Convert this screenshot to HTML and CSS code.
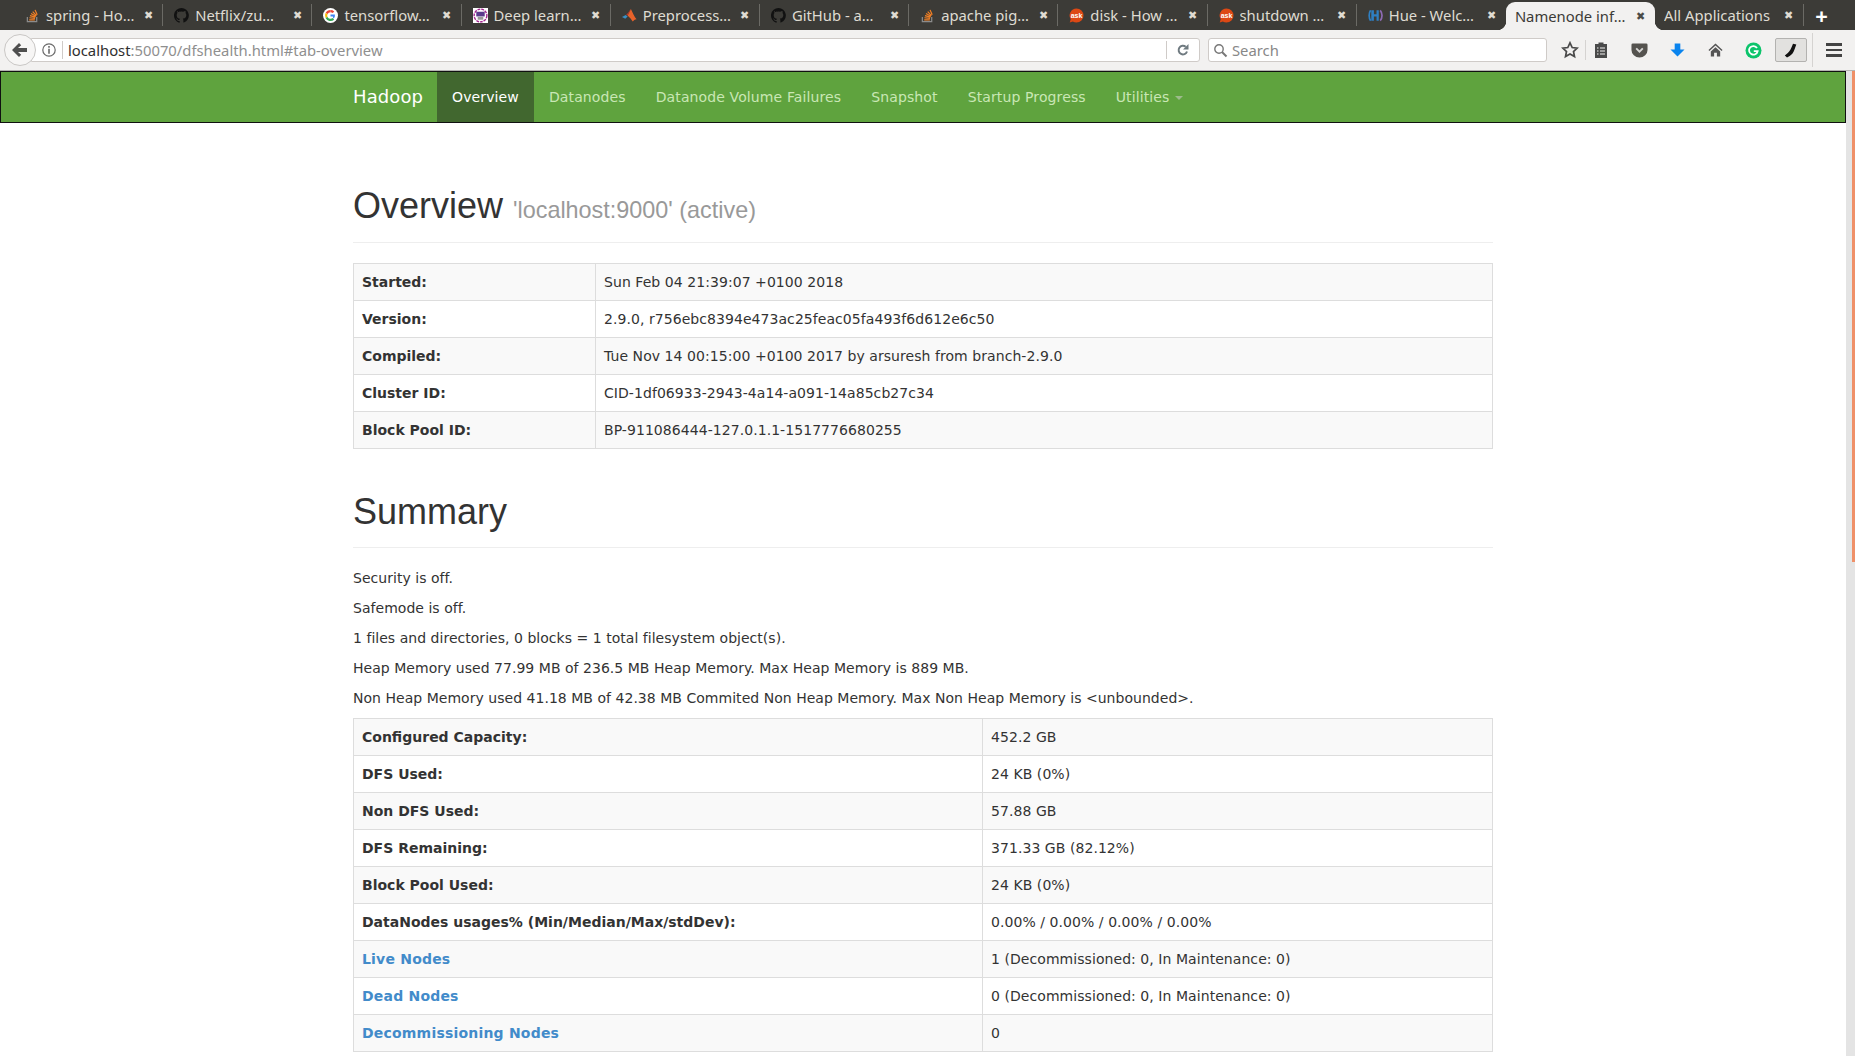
FILE: index.html
```html
<!DOCTYPE html>
<html lang="en">
<head>
  <meta charset="UTF-8" />
  <title>Namenode information</title>
  <link rel="stylesheet" href="styles.css">
</head>
<body>
  <svg class="defs" width="0" height="0">
    <symbol id="so" viewBox="0 0 16 16">
      <path d="M2.500 9.500v5h10v-5" fill="none" stroke="#8c8c8c" stroke-width="1.300"/>
      <path d="M4.500 12.600h6M4.700 10.400l6 .6M5.300 8.200l5.800 1.600M6.400 5.900l5.200 3M8.200 3.800l4 4.300M10.700 2l2.300 5.300" fill="none" stroke="#f48024" stroke-width="1.300"/>
    </symbol>
    <symbol id="gh" viewBox="0 0 16 16">
      <path fill="#111" d="M8 0a8 8 0 0 0-2.500 15.600c.4.1.5-.2.5-.4v-1.400c-2.200.5-2.700-1-2.700-1-.4-.9-.9-1.200-.9-1.200-.7-.5.100-.5.100-.5.800.1 1.200.8 1.200.8.700 1.200 1.900.9 2.300.7.100-.5.300-.9.500-1.100-1.800-.2-3.600-.9-3.600-4 0-.9.300-1.600.8-2.100-.1-.2-.4-1 .1-2.100 0 0 .7-.2 2.200.8a7.600 7.600 0 0 1 4 0c1.500-1 2.200-.8 2.200-.8.400 1.100.2 1.900.1 2.100.5.600.8 1.300.8 2.100 0 3.100-1.900 3.700-3.700 3.900.3.300.6.800.6 1.500v2.200c0 .2.100.5.600.4A8 8 0 0 0 8 0z"/>
    </symbol>
    <symbol id="ask" viewBox="0 0 16 16">
      <path fill="#dd4814" d="M8 .5a7.500 7.500 0 0 1 0 15c-1.500 0-2.800-.4-3.900-1.200L.8 15.500l1-3.500A7.500 7.500 0 0 1 8 .5z"/>
    </symbol>
  </svg>

  <header class="browser">
    <div class="tabstrip">
      <div class="tab">
        <svg class="favicon"><use href="#so"/></svg><span class="tab-title">spring - Ho…</span><span class="tab-close">✖</span>
      </div>
      <div class="tab">
        <svg class="favicon"><use href="#gh"/></svg><span class="tab-title">Netflix/zu…</span><span class="tab-close">✖</span>
      </div>
      <div class="tab">
        <svg class="favicon" viewBox="0 0 16 16">
          <circle cx="8" cy="8" r="8" fill="#fff"/>
          <path d="M8 3.300a4.700 4.700 0 0 0-4.200 2.600" fill="none" stroke="#ea4335" stroke-width="2.400"/>
          <path d="M3.800 5.900a4.700 4.700 0 0 0 0 4.200" fill="none" stroke="#fbbc05" stroke-width="2.400"/>
          <path d="M3.800 10.100a4.700 4.700 0 0 0 7.300 1.400" fill="none" stroke="#34a853" stroke-width="2.400"/>
          <path d="M11.100 11.500A4.700 4.700 0 0 0 12.700 7H8v2.100h2.500" fill="#4285f4"/>
          <path d="M8 3.300a4.700 4.700 0 0 1 3.200 1.200" fill="none" stroke="#ea4335" stroke-width="2.400"/>
        </svg><span class="tab-title">tensorflow…</span><span class="tab-close">✖</span>
      </div>
      <div class="tab">
        <svg class="favicon" viewBox="0 0 16 16">
          <rect width="16" height="16" fill="#fff"/>
          <circle cx="8" cy="8" r="6.800" fill="none" stroke="#a3238e" stroke-width="1.500" stroke-dasharray="3 1"/>
          <rect x="3.500" y="4" width="9" height="5" fill="#5b3a8c"/>
          <rect x="5" y="9.500" width="6" height="3" fill="#999"/>
        </svg><span class="tab-title">Deep learn…</span><span class="tab-close">✖</span>
      </div>
      <div class="tab">
        <svg class="favicon" viewBox="0 0 16 16">
          <path fill="#3a8fc4" d="M0 9.500l4-2 2 1.500-2.500 2.500z"/>
          <path fill="#e8622a" d="M6 8l3.500-7c1.500 3 3.500 8 6 11-2 0-3 1-4 2.500C10 12 8 10 6 8z"/>
          <path fill="#c0392b" d="M9.500 1L6 8 4.500 7c2-1 3-4 5-6z"/>
        </svg><span class="tab-title">Preprocess…</span><span class="tab-close">✖</span>
      </div>
      <div class="tab">
        <svg class="favicon"><use href="#gh"/></svg><span class="tab-title">GitHub - a…</span><span class="tab-close">✖</span>
      </div>
      <div class="tab">
        <svg class="favicon"><use href="#so"/></svg><span class="tab-title">apache pig…</span><span class="tab-close">✖</span>
      </div>
      <div class="tab">
        <svg class="favicon" viewBox="0 0 16 16"><use href="#ask" width="16" height="16"/><text class="ask-text" x="8" y="10.500">ask</text></svg><span class="tab-title">disk - How …</span><span class="tab-close">✖</span>
      </div>
      <div class="tab">
        <svg class="favicon" viewBox="0 0 16 16"><use href="#ask" width="16" height="16"/><text class="ask-text" x="8" y="10.500">ask</text></svg><span class="tab-title">shutdown …</span><span class="tab-close">✖</span>
      </div>
      <div class="tab tab-before-active">
        <svg class="favicon" viewBox="0 0 16 16">
          <path fill="#2f7fc1" d="M3.500 2.500h2.800v4.200h2.800V2.500h2.400v11H9.100V9.100H6.300v4.400H3.500z"/>
          <path fill="none" stroke="#8e6bb5" stroke-width="1.800" d="M13 2.500c2.600 3 2.600 8 0 11"/>
          <path fill="none" stroke="#2f7fc1" stroke-width="1.800" d="M2.800 2.500C.7 5.500.7 10.500 2.800 13.500"/>
        </svg><span class="tab-title">Hue - Welc…</span><span class="tab-close">✖</span>
      </div>
      <div class="tab tab-active">
        <span class="tab-title">Namenode inf…</span><span class="tab-close">✖</span>
      </div>
      <div class="tab tab-plain">
        <span class="tab-title">All Applications</span><span class="tab-close">✖</span>
      </div>
      <span class="tab-new">+</span>
    </div>

    <div class="toolbar">
      <span class="back-btn">
        <svg width="18" height="16" viewBox="0 0 18 16"><path fill="#4f4f4f" d="M8 1l2.200 2.200L7 6h9v4H7l3.200 2.800L8 15 1 8z"/></svg>
      </span>
      <div class="urlbar">
        <svg class="info-icon" width="16" height="16" viewBox="0 0 16 16">
          <circle cx="8" cy="8" r="6.200" fill="none" stroke="#6a6a6a" stroke-width="1.200"/>
          <path d="M7.200 6.800h1.600v5H7.200zM7.200 4h1.600v1.700H7.200z" fill="#6a6a6a"/>
        </svg>
        <span class="url"><span class="url-host">localhost</span>:50070/dfshealth.html#tab-overview</span>
        <span class="reload">
          <svg width="14" height="14" viewBox="0 0 14 14"><path d="M11 8.500A4.300 4.300 0 1 1 9.700 3.800" fill="none" stroke="#6f7a80" stroke-width="2"/><path d="M12.500 1v5.500H7z" fill="#6f7a80"/></svg>
        </span>
      </div>
      <div class="searchbar">
        <svg width="15" height="15" viewBox="0 0 15 15"><circle cx="6" cy="6" r="4.200" fill="none" stroke="#777" stroke-width="1.400"/><path d="M9 9l4.500 4.500" stroke="#777" stroke-width="2"/></svg>
        <span>Search</span>
      </div>
      <div class="tool-icons">
        <svg class="tool-star" width="18" height="18" viewBox="0 0 18 18"><path d="M9 1.800l2.200 4.700 5 .6-3.700 3.400 1 5L9 13l-4.500 2.500 1-5L1.800 7.100l5-.6z" fill="none" stroke="#4a4a4a" stroke-width="1.700"/></svg>
        <span class="tool-sep"></span>
        <svg class="tool-list" width="14" height="18" viewBox="0 0 14 18"><path fill="#4a4a4a" d="M1 3h3.500V1.500h5V3H13v14H1z"/><path stroke="#f2f1f0" stroke-width="1.200" d="M3 7h1.500M6 7h5M3 10h1.500M6 10h5M3 13h1.500M6 13h5"/></svg>
        <svg class="tool-pocket" width="17" height="16" viewBox="0 0 18 16"><path fill="#55534f" d="M2 1h14a1.500 1.500 0 0 1 1.500 1.500V8a8.500 8 0 0 1-17 0V2.500A1.500 1.500 0 0 1 2 1z"/><path d="M5.500 6.300L9 9.700l3.500-3.400" fill="none" stroke="#d8d7d5" stroke-width="2"/></svg>
        <svg class="tool-down" width="15" height="16" viewBox="0 0 16 16"><path fill="#0a84ee" d="M5 1h6v6.500h4.500L8 15 .5 7.500H5z"/></svg>
        <svg class="tool-home" width="15" height="16" viewBox="0 0 16 16"><path fill="#555" d="M8 1l7.500 7-1 1L8 3.200 1.500 9l-1-1zM3 9.500L8 5l5 4.500V15h-3.500v-4h-3v4H3z"/></svg>
        <svg class="tool-g" width="17" height="17" viewBox="0 0 17 17"><circle cx="8.500" cy="8.500" r="8" fill="#0cc46b"/><path d="M12 6a4.300 4.300 0 1 0 .6 3.200H8.800" fill="none" stroke="#fff" stroke-width="1.800"/></svg>
        <span class="tool-active">
          <svg width="14" height="15" viewBox="0 0 14 15"><path d="M9 .8l3.300.8-2 5.400c-.8 2.400-2.400 4.700-4.600 5.900L3 14.500.8 12.400 3.800 10c1.800-1.200 3.700-5 5.200-9.200z" fill="#111"/></svg>
        </span>
        <span class="tool-sep tool-sep-wide"></span>
        <span class="tool-menu"><i></i><i></i><i></i></span>
      </div>
    </div>
  </header>

  <div class="viewport">
    <div class="page">
      <nav class="navbar">
        <div class="nav-inner">
          <a class="brand" href="#">Hadoop</a>
          <a class="nav-link nav-active" href="#">Overview</a>
          <a class="nav-link" href="#">Datanodes</a>
          <a class="nav-link" href="#">Datanode Volume Failures</a>
          <a class="nav-link" href="#">Snapshot</a>
          <a class="nav-link" href="#">Startup Progress</a>
          <a class="nav-link" href="#">Utilities <span class="caret"></span></a>
        </div>
      </nav>

      <main class="container">
        <div class="page-header header-first">
          <h1>Overview <small>'localhost:9000' (active)</small></h1>
        </div>
        <table class="info info-overview">
          <tr><th>Started:</th><td>Sun Feb 04 21:39:07 +0100 2018</td></tr>
          <tr><th>Version:</th><td>2.9.0, r756ebc8394e473ac25feac05fa493f6d612e6c50</td></tr>
          <tr><th>Compiled:</th><td>Tue Nov 14 00:15:00 +0100 2017 by arsuresh from branch-2.9.0</td></tr>
          <tr><th>Cluster ID:</th><td>CID-1df06933-2943-4a14-a091-14a85cb27c34</td></tr>
          <tr><th>Block Pool ID:</th><td>BP-911086444-127.0.1.1-1517776680255</td></tr>
        </table>

        <div class="page-header">
          <h1>Summary</h1>
        </div>
        <p>Security is off.</p>
        <p>Safemode is off.</p>
        <p>1 files and directories, 0 blocks = 1 total filesystem object(s).</p>
        <p>Heap Memory used 77.99 MB of 236.5 MB Heap Memory. Max Heap Memory is 889 MB.</p>
        <p>Non Heap Memory used 41.18 MB of 42.38 MB Commited Non Heap Memory. Max Non Heap Memory is &lt;unbounded&gt;.</p>
        <table class="info info-summary">
          <tr><th>Configured Capacity:</th><td>452.2 GB</td></tr>
          <tr><th>DFS Used:</th><td>24 KB (0%)</td></tr>
          <tr><th>Non DFS Used:</th><td>57.88 GB</td></tr>
          <tr><th>DFS Remaining:</th><td>371.33 GB (82.12%)</td></tr>
          <tr><th>Block Pool Used:</th><td>24 KB (0%)</td></tr>
          <tr><th>DataNodes usages% (Min/Median/Max/stdDev):</th><td>0.00% / 0.00% / 0.00% / 0.00%</td></tr>
          <tr><th><a href="#">Live Nodes</a></th><td>1 (Decommissioned: 0, In Maintenance: 0)</td></tr>
          <tr><th><a href="#">Dead Nodes</a></th><td>0 (Decommissioned: 0, In Maintenance: 0)</td></tr>
          <tr><th><a href="#">Decommissioning Nodes</a></th><td>0</td></tr>
        </table>
      </main>
    </div>
    <div class="scrollbar"><div class="scroll-thumb"></div></div>
  </div>
</body>
</html>
```

FILE: styles.css
```css
html, body { margin: 0; height: 100%; overflow: hidden; }
body { display: flex; flex-direction: column; background: #fff; color: #333; font-family: "DejaVu Sans", sans-serif; font-size: 14px; line-height: 20px; }
.defs { position: absolute; }
.ask-text { fill: #fff; font-family: "Liberation Sans", sans-serif; font-size: 7.500px; font-weight: 700; text-anchor: middle; }

/* browser chrome */
.browser { flex: none; font-family: "Noto Sans", "Open Sans", sans-serif; font-size: 14.8px; }
.tabstrip { display: flex; align-items: center; height: 30px; padding-left: 14px; background: #3c3b37; }
.tab { position: relative; display: flex; align-items: center; flex: none; box-sizing: border-box; width: 149.2px; height: 22px; padding: 0 8px 0 11px; color: #dfdbd2; border-right: 1px solid #6b6a65; }
.tab-before-active { border-right: none; }
.favicon { flex: none; width: 15px; height: 15px; margin-right: 6px; }
.tab-title { flex: 1; min-width: 0; white-space: nowrap; overflow: hidden; }
.tab-close { flex: none; width: 12px; font-size: 10.500px; text-align: center; color: #dfdbd2; }
.tab-active { height: 28px; margin-top: 2px; padding-left: 9px; padding-right: 9px; background: #f2f1f0; color: #3c3b37; border: none; border-radius: 9px 9px 0 0; }
.tab-active::before, .tab-active::after { content: ""; position: absolute; bottom: 0; width: 9px; height: 9px; }
.tab-active::before { left: -9px; background: radial-gradient(circle at 0 0, transparent 9px, #f2f1f0 9.500px); }
.tab-active::after { right: -9px; background: radial-gradient(circle at 100% 0, transparent 9px, #f2f1f0 9.500px); }
.tab-active .tab-close { color: #4c4b47; }
.tab-plain { padding-left: 9px; padding-right: 9px; }
.tab-new { flex: none; margin-left: 11px; color: #fff; font-size: 22px; font-weight: 700; }

.toolbar { display: flex; align-items: center; box-sizing: border-box; height: 41px; padding-left: 4px; background: #f2f1f0; border-bottom: 1px solid #b5b4b2; }
.back-btn { position: relative; z-index: 1; display: flex; align-items: center; justify-content: center; flex: none; box-sizing: border-box; width: 32px; height: 32px; background: #f7f6f5; border: 1px solid #c9c7c5; border-radius: 50%; }
.urlbar { display: flex; align-items: center; flex: none; box-sizing: border-box; width: 1169px; height: 24px; margin-left: -5px; padding-left: 9px; background: #fff; border: 1px solid #cfcbc8; border-radius: 0 3px 3px 0; }
.info-icon { flex: none; }
.url { flex: 1; margin-left: 5px; padding-left: 5px; border-left: 1px solid #cfcbc8; color: #8f8f8f; line-height: 18px; }
.url-host { color: #2f2f2f; }
.reload { display: flex; align-items: center; justify-content: center; flex: none; width: 32px; height: 18px; border-left: 1px solid #cfcbc8; }
.searchbar { display: flex; align-items: center; flex: none; gap: 4px; box-sizing: border-box; width: 339px; height: 24px; margin-left: 8px; padding-left: 4px; background: #fff; border: 1px solid #cfcbc8; border-radius: 3px; color: #888; }
.tool-icons { display: flex; align-items: center; flex: 1; margin-left: 14px; }
.tool-sep { flex: none; width: 1px; height: 20px; margin: 0 8px 0 6px; background: #d5d3d1; }
.tool-pocket { margin-left: 23px; }
.tool-down { margin-left: 22px; }
.tool-home { margin-left: 23px; }
.tool-g { margin-left: 22px; }
.tool-active { display: flex; align-items: center; justify-content: center; box-sizing: border-box; width: 32px; height: 24px; margin-left: 13px; background: #e2e1df; border: 1px solid #b3b2b0; border-radius: 2px; }
.tool-sep-wide { height: 34px; margin: 0 0 0 5px; }
.tool-menu { display: flex; flex-direction: column; gap: 3px; width: 16px; margin-left: 13px; }
.tool-menu i { display: block; height: 2.500px; background: #444; }

/* page */
.viewport { flex: 1; display: flex; min-height: 0; overflow: hidden; }
.page { flex: 1; min-width: 0; overflow: hidden; }
.scrollbar { flex: none; box-sizing: border-box; width: 9px; padding-left: 6px; background: #e4e4e4; }
.scroll-thumb { width: 3px; height: 491px; background: #ef9068; }

.navbar { box-sizing: border-box; height: 52px; background: #5fa33e; border: 1px solid #101010; }
.nav-inner { display: flex; box-sizing: border-box; width: 1170px; height: 50px; margin: 0 auto; padding: 0 15px; }
.navbar a { text-decoration: none; }
.brand { padding: 15px 14px 15px 0; color: #fff; font-size: 18px; line-height: 20px; letter-spacing: .1px; }
.nav-link { padding: 15px; color: #c9e7b5; line-height: 20px; letter-spacing: .12px; }
.nav-active { background: #41672f; color: #fff; }
.caret { display: inline-block; width: 0; height: 0; margin-left: 1px; vertical-align: middle; border-top: 4px solid #9dbb8c; border-left: 4px solid transparent; border-right: 4px solid transparent; }

.container { box-sizing: border-box; width: 1170px; margin: 0 auto; padding: 0 15px; }
.page-header { margin: 43px 0 20px; padding-bottom: 6px; border-bottom: 1px solid #eee; }
.header-first { margin-top: 63px; }
h1 { margin: 20px 0 10px; font-family: "Liberation Sans", Arial, sans-serif; font-size: 36px; font-weight: 500; line-height: 39.600px; color: #333; }
h1 small { font-size: 23.400px; font-weight: 400; line-height: 1; color: #999; }
p { margin: 0 0 10px; line-height: 20px; letter-spacing: .03px; }

.info { width: 100%; margin-bottom: 20px; border-collapse: collapse; border: 1px solid #ddd; table-layout: fixed; }
.info th, .info td { box-sizing: border-box; height: 37px; padding: 8px; border: 1px solid #ddd; text-align: left; vertical-align: top; line-height: 20px; }
.info td { letter-spacing: .06px; }
.info tr:nth-child(odd) { background: #f9f9f9; }
.info a { color: #428bca; text-decoration: none; letter-spacing: .2px; }
.info-overview th { width: 242px; }
.info-summary th { width: 629px; }
```
